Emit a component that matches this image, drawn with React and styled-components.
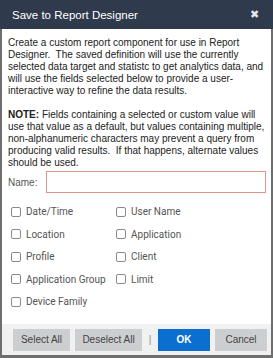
import React from 'react'
import styled, { createGlobalStyle } from 'styled-components';

const GlobalStyle = createGlobalStyle`
html, body {
    margin: 0;
    padding: 0;
    background: #fff;
}
* {
    box-sizing: border-box;
}
`;

const fields = [
    ['Date/Time', 'User Name'],
    ['Location', 'Application'],
    ['Profile', 'Client'],
    ['Application Group', 'Limit'],
    ['Device Family', null],
];

const App = () => {
    return (
        <>
            <GlobalStyle />
            <DialogDiv>
                <HeaderDiv>
                    <h1>Save to Report Designer</h1>
                    <CloseBtn>✖</CloseBtn>
                </HeaderDiv>
                <BodyDiv>
                    <TextP>
                        Create a custom report component for use in Report Designer.&nbsp; The saved definition will use the currently selected data target and statistc to get analytics data, and will use the fields selected below to provide a user-interactive way to refine the data results.
                    </TextP>
                    <TextP>
                        <b>NOTE:</b> Fields containing a selected or custom value will use that value as a default, but values containing multiple, non-alphanumeric characters may prevent a query from producing valid results.&nbsp; If that happens, alternate values should be used.
                    </TextP>
                    <NameRow>
                        <label>Name:</label>
                        <NameInput type="text" />
                    </NameRow>
                    <FieldGrid>
                        {fields.map((row, i) => row.map((f, j) => (
                            f ? (
                                <CheckLabel key={i + '-' + j}>
                                    <CheckBox />
                                    {f}
                                </CheckLabel>
                            ) : <span key={i + '-' + j} />
                        )))}
                    </FieldGrid>
                </BodyDiv>
                <FooterDiv>
                    <Button w="57px">Select All</Button>
                    <Button w="67px">Deselect All</Button>
                    <Divider>|</Divider>
                    <Button primary w="52px">OK</Button>
                    <Button w="52px">Cancel</Button>
                </FooterDiv>
            </DialogDiv>
        </>
    )
}

export default App


const DialogDiv = styled.div`
width: 273px;
height: 358px;
border: 2px solid #6e6e6e;
border-top: 0;
border-bottom-width: 3px;
background: #fff;
display: flex;
flex-direction: column;
font-family: "Liberation Sans", Arial, sans-serif;
`;

const HeaderDiv = styled.div`
height: 29px;
flex-shrink: 0;
background-color: #2f3b4d;
margin: 0 -2px;
padding: 0 14px 0 12px;
display: flex;
align-items: center;
justify-content: space-between;
h1 {
    margin: 0;
    color: #fff;
    font-size: 11.5px;
    font-weight: 400;
}
`;

const CloseBtn = styled.span`
color: #e4e6ea;
font-size: 11px;
line-height: 1;
`;

const BodyDiv = styled.div`
flex: 1;
padding: 8px 4px 0 6px;
`;

const TextP = styled.p`
margin: 0 0 12px;
color: #222;
font-size: 10px;
line-height: 12px;
b {
    font-weight: 700;
}
`;

const NameRow = styled.div`
display: flex;
align-items: center;
margin-top: -10px;
label {
    width: 38px;
    color: #555;
    font-size: 10px;
}
`;

const NameInput = styled.input`
width: 220px;
height: 22px;
border: 1px solid #e0938c;
background: #fff;
outline: none;
`;

const FieldGrid = styled.div`
display: grid;
grid-template-columns: 105px 1fr;
row-gap: 9.5px;
margin-top: 12px;
padding-left: 3px;
`;

const CheckLabel = styled.label`
display: flex;
align-items: center;
gap: 5px;
height: 13px;
color: #555;
font-family: Roboto, "Liberation Sans", sans-serif;
font-size: 10px;
`;

const CheckBox = styled.span`
width: 10px;
height: 10px;
border: 1px solid #8a8a8a;
border-radius: 2px;
background: #fff;
`;

const FooterDiv = styled.div`
height: 31px;
flex-shrink: 0;
background: #f1f1f1;
display: flex;
align-items: center;
padding: 0 4px 0 11px;
gap: 5px;
`;

const Button = styled.button`
width: ${props => props.w};
height: 22px;
padding: 0;
border: 0;
white-space: nowrap;
background: ${props => props.primary ? '#0b6fcf' : '#ccced0'};
color: ${props => props.primary ? '#fff' : '#444'};
font-family: "Liberation Sans", Arial, sans-serif;
font-size: 10px;
font-weight: ${props => props.primary ? 700 : 400};
`;

const Divider = styled.span`
width: 6px;
text-align: center;
color: #888;
font-size: 10px;
`;
